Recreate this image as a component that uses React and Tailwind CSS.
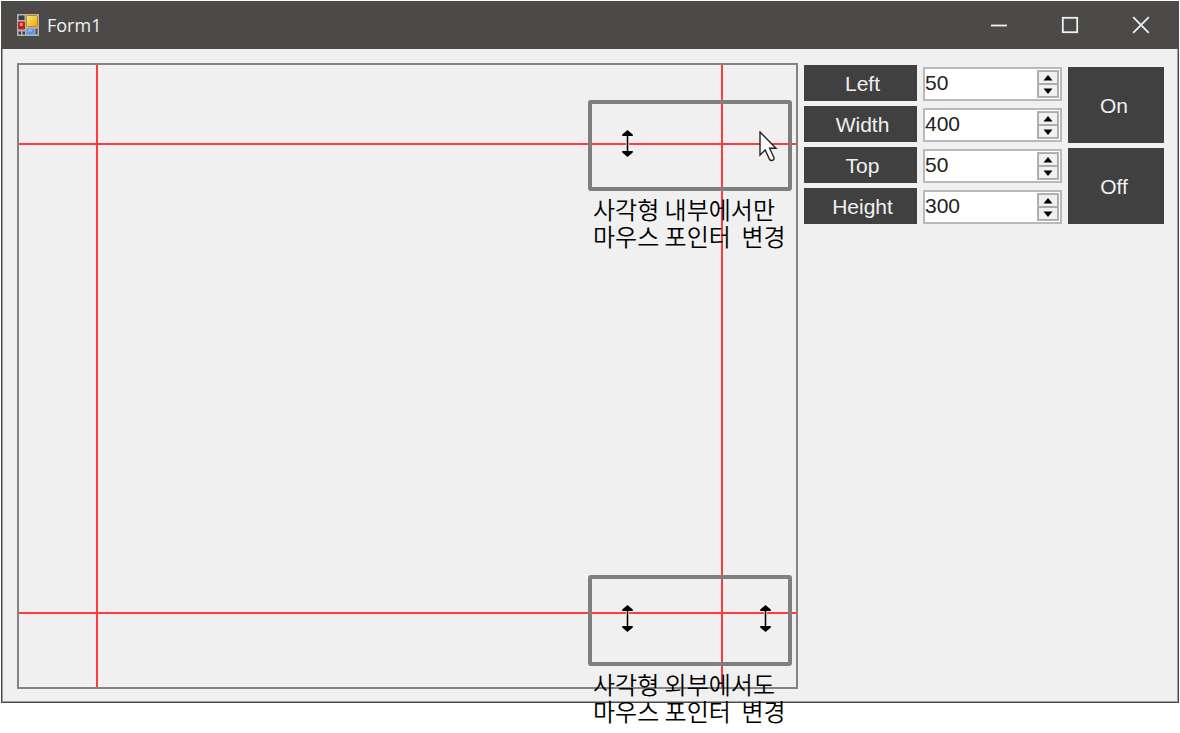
import React, { useState } from 'react'

// screen pixels per form unit
const SCALE = 1.5625

const fields = [
    { key: 'left', label: 'Left' },
    { key: 'width', label: 'Width' },
    { key: 'top', label: 'Top' },
    { key: 'height', label: 'Height' },
]

const FormIcon = () => (
    <svg width="22" height="22" viewBox="0 0 22 22" aria-hidden="true">
        <defs>
            <linearGradient id="yellowTile" x1="0" y1="0" x2="1" y2="1">
                <stop offset="0" stopColor="#ffe98a" />
                <stop offset="1" stopColor="#e8a800" />
            </linearGradient>
        </defs>
        <rect width="22" height="22" fill="#b4b4b4" />
        <rect x="1.5" y="1.5" width="6" height="4.5" fill="#3c3c3c" />
        <rect x="9.5" y="1.5" width="11" height="11" rx="1" fill="url(#yellowTile)" stroke="#c08a10" />
        <rect x="1" y="7.5" width="7" height="8" rx="1" fill="#c2201c" />
        <rect x="3" y="9" width="2.5" height="3" fill="#f0a090" />
        <rect x="1.5" y="17.5" width="2.5" height="3" fill="#3c3c3c" />
        <rect x="5.5" y="17.5" width="2.5" height="3" fill="#3c3c3c" />
        <rect x="9.5" y="14.5" width="8" height="6" rx="1" fill="#5a94ee" />
        <rect x="11" y="15.5" width="4" height="2" fill="#8fbcff" />
        <rect x="18.5" y="14.5" width="2" height="6" fill="#4c4c4c" />
    </svg>
)

const ResizeCursor = ({ className }) => (
    <svg className={className} width="13" height="29" viewBox="-1 -1 13 29" aria-hidden="true">
        <path
            d="M5.5 0 L10.8 4.6 V6 H6.3 V21 H10.8 V22.4 L5.5 27 L0.2 22.4 V21 H4.7 V6 H0.2 V4.6 Z"
            fill="#000"
            stroke="#f6f6f6"
            strokeWidth="1.6"
            paintOrder="stroke"
        />
    </svg>
)

const ArrowCursor = ({ className }) => (
    <svg className={className} width="19" height="31" viewBox="0 0 19 31" aria-hidden="true">
        <path
            d="M1 1 V24 L6.2 19 L10.4 28.2 Q12.2 30.4 14.6 28.6 Q15.4 27.8 14.8 26.2 L10.6 17.2 H17 Z"
            fill="#fff"
            stroke="#222"
            strokeWidth="1.4"
        />
    </svg>
)

const TitleBar = () => (
    <header className="flex h-[47px] items-center justify-between bg-[#4c4a48] pb-0.5 pl-[15px] pr-0.5 text-[#f0f0f0]">
        <div className="flex items-center gap-2">
            <FormIcon />
            <h1 className="font-['Open_Sans',sans-serif] text-[18px] leading-6">Form1</h1>
        </div>
        <div className="flex h-full">
            <button type="button" aria-label="Minimize" className="flex w-[71px] items-center justify-center">
                <svg width="18" height="18" viewBox="0 0 18 18" fill="none" stroke="currentColor" strokeWidth="1.8">
                    <path d="M1 9.5 H17" />
                </svg>
            </button>
            <button type="button" aria-label="Maximize" className="flex w-[71px] items-center justify-center">
                <svg width="18" height="18" viewBox="0 0 18 18" fill="none" stroke="currentColor" strokeWidth="1.8">
                    <rect x="1.8" y="1.8" width="14.4" height="14.4" />
                </svg>
            </button>
            <button type="button" aria-label="Close" className="flex w-[71px] items-center justify-center">
                <svg width="18" height="18" viewBox="0 0 18 18" fill="none" stroke="currentColor" strokeWidth="1.8">
                    <path d="M1.2 1.2 L16.8 16.8 M16.8 1.2 L1.2 16.8" />
                </svg>
            </button>
        </div>
    </header>
)

const NumericBox = ({ id, value, onChange }) => {
    const spin = "flex flex-1 items-center justify-center border border-[#acacac] bg-[#f0f0f0]"

    return (
        <div className="flex h-[34px] border-2 border-[#b8b9be] bg-white">
            <input
                id={id}
                type="text"
                inputMode="numeric"
                value={value}
                onChange={e => onChange(Number(e.target.value) || 0)}
                className="min-w-0 flex-1 pb-0.5 text-[21px] leading-6 text-[#222] outline-none"
            />
            <div className="my-px mr-px flex w-[22px] flex-col border border-[#b4b4b4]">
                <button type="button" aria-label={`Increase ${id}`} onClick={() => onChange(value + 1)} className={spin}>
                    <svg width="10" height="6" viewBox="0 0 10 6"><path d="M5 0 L9.5 5.5 H0.5 Z" /></svg>
                </button>
                <button type="button" aria-label={`Decrease ${id}`} onClick={() => onChange(value - 1)} className={spin}>
                    <svg width="10" height="6" viewBox="0 0 10 6"><path d="M5 6 L9.5 0.5 H0.5 Z" /></svg>
                </button>
            </div>
        </div>
    )
}

// framed area of the canvas with a caption under it
const Callout = ({ className, caption, children }) => (
    <figure className={`absolute left-[569px] w-[204px] ${className}`}>
        <div className="relative h-[91px] rounded-[3px] border-4 border-[#7f7f7f]">{children}</div>
        <figcaption className="whitespace-pre pl-[5px] pt-1 font-['Noto_Sans_CJK_KR',sans-serif] text-[24px] font-[350] leading-[27px] text-black">
            {caption}
        </figcaption>
    </figure>
)

const Canvas = ({ rect, visible }) => {
    const xs = [rect.left, rect.left + rect.width]
    const ys = [rect.top, rect.top + rect.height]

    return (
        <div className="relative min-h-[626px] flex-1 border-2 border-[#848484]">
            {visible && xs.map((x, i) => (
                <div key={`x${i}`} className="absolute inset-y-0 -ml-px w-0.5 bg-[#ff3b3b]" style={{ left: Math.round(x * SCALE) }} />
            ))}
            {visible && ys.map((y, i) => (
                <div key={`y${i}`} className="absolute inset-x-0 h-0.5 bg-[#ff3b3b]" style={{ top: Math.round(y * SCALE) }} />
            ))}

            <Callout className="top-[35px]" caption={'사각형 내부에서만\n마우스 포인터  변경'}>
                <ResizeCursor className="absolute left-[29px] top-[25px]" />
                <ArrowCursor className="absolute left-[167px] top-[27px]" />
            </Callout>
            <Callout className="top-[510px]" caption={'사각형 외부에서도\n마우스 포인터  변경'}>
                <ResizeCursor className="absolute left-[29px] top-[25px]" />
                <ResizeCursor className="absolute left-[167px] top-[25px]" />
            </Callout>
        </div>
    )
}

const App = () => {
    const [rect, setRect] = useState({ left: 50, width: 400, top: 50, height: 300 })
    const [visible, setVisible] = useState(true)

    return (
        <div className="min-h-screen bg-white p-px font-['Liberation_Sans',Arial,sans-serif]">
            <main className="border border-[#4c4a48] bg-[#f0f0f0]">
                <TitleBar />
                <div className="flex gap-1.5 border-x border-b border-[#a0a0a0] pb-3 pl-3.5 pr-[13px] pt-3.5">
                    <Canvas rect={rect} visible={visible} />

                    <div className="flex w-[113px] flex-col gap-[5px] pt-0.5">
                        {fields.map(({ key, label }) => (
                            <label
                                key={key}
                                htmlFor={key}
                                className="flex h-9 items-center justify-center bg-[#404040] pl-1 pt-0.5 text-[21px] leading-6 text-[#f0f0f0]"
                            >
                                {label}
                            </label>
                        ))}
                    </div>

                    <div className="flex w-[139px] flex-col gap-[7px] pt-1">
                        {fields.map(({ key }) => (
                            <NumericBox key={key} id={key} value={rect[key]} onChange={v => setRect({ ...rect, [key]: v })} />
                        ))}
                    </div>

                    <div className="flex w-24 flex-col gap-[5px] pt-1">
                        <button type="button" onClick={() => setVisible(true)} className="h-[76px] bg-[#404040] pr-1 pt-0.5 text-[21px] leading-6 text-[#f0f0f0]">
                            On
                        </button>
                        <button type="button" onClick={() => setVisible(false)} className="h-[76px] bg-[#404040] pr-1 pt-0.5 text-[21px] leading-6 text-[#f0f0f0]">
                            Off
                        </button>
                    </div>
                </div>
            </main>
        </div>
    )
}

export default App
